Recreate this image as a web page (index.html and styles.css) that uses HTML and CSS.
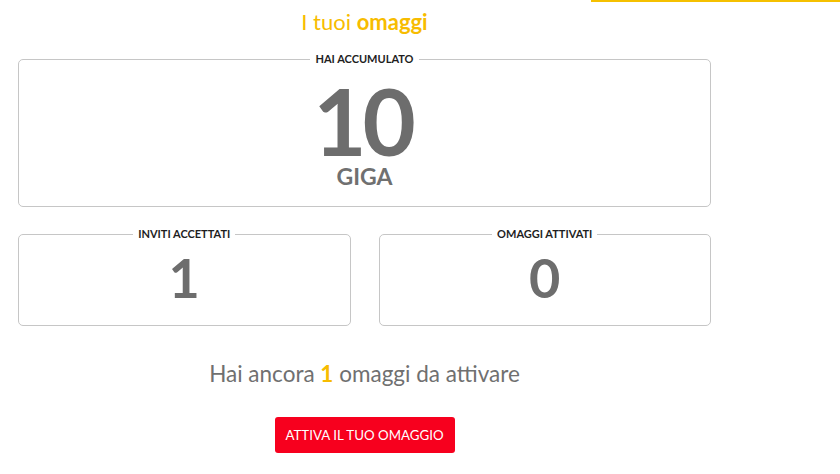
FILE: index.html
```html
<!DOCTYPE html>
<html lang="it">
<head>
<meta charset="utf-8">
<title>I tuoi omaggi</title>
<link rel="stylesheet" href="styles.css">
</head>
<body>
<div class="topline"></div>
<main class="page">
  <h1 class="title">I tuoi <strong>omaggi</strong></h1>
  <fieldset class="card card-big">
    <legend class="card-label">HAI ACCUMULATO</legend>
    <div class="big-num">10</div>
    <div class="unit">GIGA</div>
  </fieldset>
  <div class="row">
    <fieldset class="card card-small">
      <legend class="card-label">INVITI ACCETTATI</legend>
      <div class="num">1</div>
    </fieldset>
    <fieldset class="card card-small">
      <legend class="card-label">OMAGGI ATTIVATI</legend>
      <div class="num">0</div>
    </fieldset>
  </div>
  <p class="remaining">Hai ancora <strong>1</strong> omaggi da attivare</p>
  <div class="actions">
    <button class="btn" type="button">ATTIVA IL TUO OMAGGIO</button>
  </div>
</main>
</body>
</html>
```
FILE: styles.css
```css
html, body {
  margin: 0;
  padding: 0;
  background: #ffffff;
}
body {
  font-family: Lato, "Open Sans", Arial, sans-serif;
  color: #6f6f6f;
  position: relative;
  width: 840px;
  height: 474px;
  overflow: hidden;
}
.topline {
  position: absolute;
  top: 0;
  left: 591px;
  right: 0;
  height: 2px;
  background: #f5c000;
}
.page {
  width: 693px;
  margin-left: 18px;
  display: flex;
  flex-direction: column;
}
.title {
  margin: 8px 0 0;
  font-size: 22px;
  line-height: 28px;
  font-weight: 400;
  color: #f7bc00;
  text-align: center;
}
.title strong {
  font-weight: 700;
}
.card {
  margin: 0;
  padding: 0;
  border: 1px solid #c6c6c6;
  border-radius: 5px;
  text-align: center;
  min-width: 0;
  box-sizing: border-box;
}
.card-label {
  margin: 0 auto;
  padding: 0 5px;
  font-size: 11px;
  line-height: 12px;
  font-weight: 700;
  color: #1e1e1e;
}
.card-big {
  margin-top: 17px;
  height: 154px;
}
.big-num {
  font-size: 92px;
  font-weight: 700;
  line-height: 80px;
  margin-top: 16px;
  color: #6d6d6d;
  letter-spacing: -4px;
  text-indent: -4px;
}
.unit {
  font-size: 23px;
  font-weight: 700;
  line-height: 28px;
  margin-top: 1px;
  color: #707070;
}
.row {
  display: grid;
  grid-template-columns: 1fr 1fr;
  gap: 28px;
  margin-top: 21px;
}
.card-small {
  height: 98px;
}
.num {
  font-size: 54px;
  font-weight: 700;
  line-height: 56px;
  margin-top: 10px;
  color: #6d6d6d;
}
.remaining {
  margin: 34px 0 0;
  font-size: 22.5px;
  line-height: 28px;
  text-align: center;
  color: #707070;
}
.remaining strong {
  color: #f7bc00;
  font-weight: 700;
}
.actions {
  display: flex;
  justify-content: center;
  margin-top: 29px;
}
.btn {
  font-family: Lato, "Open Sans", Arial, sans-serif;
  width: 180px;
  height: 36px;
  border: none;
  border-radius: 3px;
  background: #f7001e;
  color: #ffffff;
  font-size: 13.3px;
  padding: 0;
  cursor: pointer;
}
```
